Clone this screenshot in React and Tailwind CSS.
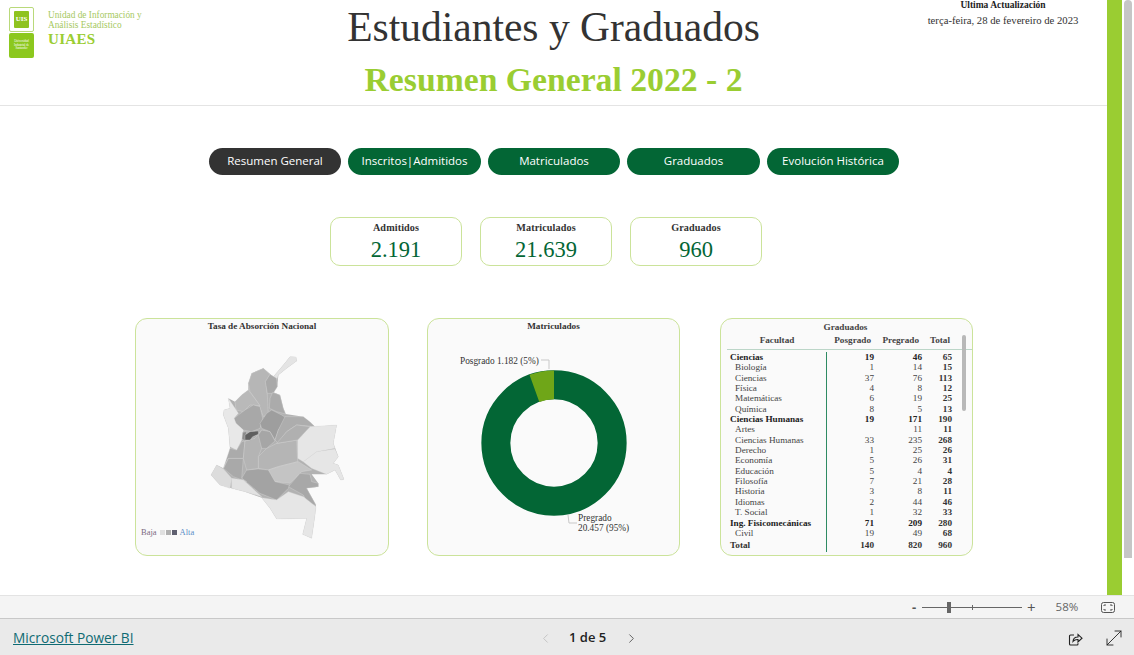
import React from "react";
import { ChevronLeft, ChevronRight, MoveDiagonal } from "lucide-react";

const tabs = ["Resumen General", "Inscritos|Admitidos", "Matriculados", "Graduados", "Evolución Histórica"];

const kpis = [
  { label: "Admitidos", value: "2.191" },
  { label: "Matriculados", value: "21.639" },
  { label: "Graduados", value: "960" },
];

const rows = [
  ["Ciencias", "19", "46", "65", true],
  ["Biología", "1", "14", "15"],
  ["Ciencias", "37", "76", "113"],
  ["Física", "4", "8", "12"],
  ["Matemáticas", "6", "19", "25"],
  ["Química", "8", "5", "13"],
  ["Ciencias Humanas", "19", "171", "190", true],
  ["Artes", "", "11", "11"],
  ["Ciencias Humanas", "33", "235", "268"],
  ["Derecho", "1", "25", "26"],
  ["Economía", "5", "26", "31"],
  ["Educación", "5", "4", "4"],
  ["Filosofía", "7", "21", "28"],
  ["Historia", "3", "8", "11"],
  ["Idiomas", "2", "44", "46"],
  ["T. Social", "1", "32", "33"],
  ["Ing. Fisicomecánicas", "71", "209", "280", true],
  ["Civil", "19", "49", "68"],
];

const outline =
  "295,250 315,260 335,240 355,225 355,205 365,175 400,160 430,185 460,150 480,125 498,126 500,138 470,160 445,180 442,215 430,232 450,240 460,280 467,297 520,305 555,335 620,330 610,385 625,425 610,445 625,450 642,493 632,495 615,465 590,478 545,478 565,505 565,515 530,520 558,570 555,600 545,670 518,658 530,610 440,612 420,580 395,548 345,530 305,520 270,510 243,480 260,450 280,460 295,430 300,400 295,340 280,300 282,285 300,280";

// departamentos, traced by hand from the reference
const regions = [
  ["#e4e4e4", "430,185 460,150 480,125 498,126 500,138 470,160 445,180 440,195"],
  ["#b6b6b6", "365,175 400,160 420,178 408,200 412,240 415,300 400,305 385,265 360,230 355,205"],
  ["#a9a9a9", "420,178 440,190 442,215 430,235 412,235 406,200"],
  ["#b9b9b9", "335,240 355,225 385,265 390,272 360,270 340,290 318,285 315,260"],
  ["#ababab", "428,232 450,240 460,280 467,297 440,290 418,280 420,250"],
  ["#a8a8a8", "345,285 370,270 390,275 398,310 390,340 365,350 340,345 315,325 312,310 325,300"],
  ["#9e9e9e", "410,295 425,285 455,300 470,310 445,345 435,375 420,350 395,340 390,325"],
  ["#adadad", "465,305 520,305 540,320 555,335 500,330 470,350 445,385 435,375 445,345"],
  ["#e8e8e8", "295,250 325,295 312,310 318,325 340,345 335,375 320,405 300,395 295,340 280,300 282,285 300,280"],
  ["#e6e6e6", "540,335 620,330 610,385 615,400 560,410 520,440 503,430 503,375"],
  ["#e6e6e6", "520,440 560,410 615,402 625,425 610,445 625,450 642,493 632,495 615,465 590,478 545,460"],
  ["#b5b5b5", "500,375 503,440 445,455 415,465 385,460 385,425 410,400 440,385"],
  ["#b0b0b0", "440,385 470,350 500,330 540,335 503,375"],
  ["#c4c4c4", "415,465 445,455 505,440 545,465 515,470 480,505 435,500 420,490"],
  ["#a8a8a8", "475,515 510,475 540,478 545,500 565,505 565,515 530,520 558,570 535,570 520,540"],
  ["#a3a3a3", "385,462 415,465 435,500 478,510 475,520 440,555 390,535 335,490 350,465"],
  ["#a9a9a9", "280,460 295,430 340,430 335,490 350,500 310,485"],
  ["#dcdcdc", "243,480 260,450 280,462 305,490 300,520 270,510"],
  ["#e2e2e2", "305,490 340,495 395,545 345,530 305,520"],
  ["#e6e6e6", "395,548 440,555 475,530 520,545 558,575 555,600 545,670 518,658 530,610 440,612 420,580"],
  ["#ababab", "300,400 320,405 335,380 345,378 340,430 295,430 280,460"],
  ["#b4b4b4", "345,378 375,370 395,345 410,350 395,400 385,425 385,460 350,465 340,430"],
  ["#a6a6a6", "385,360 395,345 420,350 435,378 410,400 395,400"],
  ["#8c8c8c", "338,352 350,350 346,378 336,372"],
  ["#5f5f5f", "345,360 360,350 385,348 385,358 368,365 360,375 345,375"],
];

const ColombiaMap = () => (
  <svg viewBox="240 120 405 555" className="h-[185px] w-[135px] mt-[19px] shrink-0">
    <polygon points={outline} fill="#b2b2b2" />
    {regions.map(([fill, points], i) => (
      <polygon key={i} points={points} fill={fill} stroke="#dedede" strokeWidth="1" strokeLinejoin="round" />
    ))}
  </svg>
);

// outer r 72.6, inner r 43.7, posgrado slice is 5.46%
const Donut = () => (
  <svg width="251" height="219" className="block" fontFamily="'Liberation Serif', serif" fontSize="9.3">
    <g transform="translate(-1 0)">
      <circle cx="127" cy="107" r="58.15" fill="none" stroke="#036635" strokeWidth="29" />
      <path d="M127 34.4 A72.6 72.6 0 0 0 102.5 38.7 L112.3 65.9 A43.7 43.7 0 0 1 127 63.3 Z" fill="#6fa618" />
    </g>
    <polyline points="113,24 121,24 121,33" fill="none" stroke="#c8c8c8" />
    <polyline points="140,179 141,187 149,187" fill="none" stroke="#c8c8c8" />
    <text x="32" y="28" fill="#333">Posgrado 1.182 (5%)</text>
    <text x="150" y="185" fill="#333">Pregrado</text>
    <text x="150" y="195" fill="#333">20.457 (95%)</text>
  </svg>
);

const Card = ({ title, className, children }) => (
  <div className={`relative h-[238px] rounded-[12px] border border-[#cbe39a] bg-[#fafafa] overflow-hidden ${className}`}>
    {title && <div className="h-[17px] text-center text-[9.2px] leading-[15px] font-bold text-[#333]">{title}</div>}
    {children}
  </div>
);

const GradRow = ({ row }) => {
  const [name, pos, pre, total, bold] = row;
  return (
    <div className={`grid grid-cols-[100px_47px_48px_30px] h-[10.35px] text-[9.2px] leading-[10.35px] ${bold ? "font-bold text-[#222]" : "text-[#444]"}`}>
      <div className={`border-r border-[#2e8b63] whitespace-nowrap ${bold ? "pl-[3px]" : "pl-[8px]"}`}>{name}</div>
      <div className="text-right">{pos}</div>
      <div className="text-right">{pre}</div>
      <div className="text-right font-bold text-[#333]">{total}</div>
    </div>
  );
};

const GradTable = () => (
  <div className="flex flex-col">
    <div className="ml-[6px] grid grid-cols-[100px_47px_48px_30px] h-[16px] border-b border-[#bcd6c8] text-[9.2px] leading-[12px] font-bold text-[#444]">
      <div className="text-center">Facultad</div>
      <div className="text-right pr-[3px] whitespace-nowrap">Posgrado</div>
      <div className="text-right pr-[3px] whitespace-nowrap">Pregrado</div>
      <div className="text-right pr-[2px]">Total</div>
    </div>
    <div className="ml-[6px] pt-[2px]">
      {rows.map((row, i) => (
        <GradRow key={i} row={row} />
      ))}
      <div className="grid grid-cols-[100px_47px_48px_30px] h-[14px] text-[9.2px] leading-[14px] font-bold text-[#333]">
        <div className="border-r border-[#2e8b63] pl-[3px]">Total</div>
        <div className="text-right">140</div>
        <div className="text-right">820</div>
        <div className="text-right">960</div>
      </div>
    </div>
    {/* table scrollbar */}
    <div className="absolute left-[241px] top-[16px] h-[76px] w-[4px] rounded-full bg-[#b8b8b8]" />
  </div>
);

export default function App() {
  return (
    <div className="flex h-[655px] w-[1134px] flex-col overflow-hidden bg-white font-['Liberation_Serif',serif]">
      <div className="flex h-[595px] shrink-0">
        <div className="w-[1107px] shrink-0">
          {/* header */}
          <div className="box-border flex h-[106px] border-b border-[#e4e4e4]">
            <div className="flex w-[340px] shrink-0 pl-[9px] pt-[7px]">
              <div className="w-[25px] shrink-0">
                <div className="flex h-[25px] items-center justify-center rounded-[2px] border border-[#b9d97a] bg-white">
                  <div className="flex h-[17px] w-[15px] items-center justify-center rounded-[1px] bg-[#8fc31f] text-[7px] font-bold leading-none text-white">UIS</div>
                </div>
                <div className="mt-[1px] flex h-[25px] flex-col items-center justify-center rounded-[2px] bg-[#8cc81e] text-center text-[3px] leading-[3.6px] text-white">
                  <span>Universidad</span>
                  <span>Industrial de</span>
                  <span>Santander</span>
                </div>
              </div>
              <div className="ml-[14px] text-[#a6c95f]">
                <div className="pt-[3px] text-[9.3px] leading-[10px]">Unidad de Información y</div>
                <div className="text-[9.3px] leading-[10px]">Análisis Estadístico</div>
                <div className="mt-[1px] text-[15px] font-bold leading-[17px] tracking-[0.3px] text-[#9acd32]">UIAES</div>
              </div>
            </div>
            <div className="w-[427px] shrink-0 text-center">
              <div className="pt-[3px] text-[41.5px] leading-[48px] whitespace-nowrap text-[#333]">Estudiantes y Graduados</div>
              <div className="mt-[10px] text-[33.7px] font-bold leading-[37px] whitespace-nowrap text-[#9acd32]">Resumen General 2022 - 2</div>
            </div>
            <div className="flex-1">
              <div className="ml-auto mr-[24px] w-[160px] text-center text-[#222]">
                <div className="text-[9.5px] font-bold leading-[10px]">Ultima Actualización</div>
                <div className="mt-[5px] text-[10.7px] leading-[11px] whitespace-nowrap text-[#333]">terça-feira, 28 de fevereiro de 2023</div>
              </div>
            </div>
          </div>

          {/* tabs */}
          <div className="mt-[42px] flex justify-center gap-[7px] pl-[1px] font-['Open_Sans',sans-serif]">
            {tabs.map((tab, i) => (
              <button
                key={tab}
                className={`h-[27px] w-[132.5px] rounded-full pb-[1px] text-[11.5px] text-white ${i === 0 ? "bg-[#333333]" : "bg-[#036635]"}`}
              >
                {tab}
              </button>
            ))}
          </div>

          {/* kpis */}
          <div className="ml-[330px] mt-[42px] flex gap-[18px]">
            {kpis.map((kpi) => (
              <div key={kpi.label} className="box-border h-[49px] w-[132px] rounded-[10px] border border-[#cbe39a] bg-white pt-[3px] text-center">
                <div className="text-[10.2px] font-bold leading-[13px] tracking-[0.1px] text-[#333]">{kpi.label}</div>
                <div className="pt-[2px] text-[22.5px] leading-[27px] text-[#036635]">{kpi.value}</div>
              </div>
            ))}
          </div>

          {/* charts */}
          <div className="ml-[135px] mt-[52px] flex">
            <Card title="Tasa de Absorción Nacional" className="w-[254px]">
              <div className="flex">
                <div className="mb-[3px] flex w-[74px] shrink-0 items-center self-end pl-[5px] text-[8.5px] leading-[10px]">
                  <span className="text-[#7a6a80]">Baja</span>
                  <span className="ml-[3px] h-[5px] w-[5px] bg-[#e0e0e0]" />
                  <span className="ml-[1px] h-[5px] w-[5px] bg-[#b0b0b0]" />
                  <span className="ml-[1px] h-[5px] w-[5px] bg-[#5f6070]" />
                  <span className="ml-[3px] text-[#5b8ec7]">Alta</span>
                </div>
                <ColombiaMap />
              </div>
            </Card>
            <Card title="Matriculados" className="ml-[38px] w-[253px]">
              <Donut />
            </Card>
            <Card className="ml-[40px] w-[253px]">
              <div className="h-[15px] pt-[2px] pr-[2px] text-center text-[9.2px] leading-[12px] font-bold text-[#444]">Graduados</div>
              <GradTable />
            </Card>
          </div>
        </div>
        <div className="w-[15px] shrink-0 bg-[#9acd32]" />
        <div className="ml-[2px] h-[558px] w-[8px] rounded-t-full rounded-b-[2px] bg-[#c6c6c6]" />
      </div>

      {/* zoom bar */}
      <div className="box-border flex h-[24px] shrink-0 items-center border-y border-t-[#e3e3e3] border-b-[#c8c8c8] bg-[#f4f4f4] pl-[912px] font-['Open_Sans',sans-serif] text-[#555]">
        <span className="w-[10px] text-[13px] font-bold leading-none">-</span>
        <div className="relative flex h-[11px] w-[100px] items-center">
          <div className="h-[1px] flex-1 bg-[#666]" />
          <div className="absolute left-[25px] top-0 h-[11px] w-[4px] bg-[#666]" />
          <div className="absolute left-[50px] top-[3px] h-[5px] w-[1px] bg-[#666]" />
        </div>
        <span className="ml-[5px] text-[15px] leading-none">+</span>
        <span className="ml-[20px] text-[11.5px] text-[#666]">58%</span>
        <svg width="14" height="11" viewBox="0 0 14 11" fill="none" stroke="#555" className="ml-[23px]">
          <rect x="0.5" y="0.5" width="13" height="10" rx="2" />
          <path d="M3 4V3H5M9 3H11V4M11 7V8H9M5 8H3V7" />
        </svg>
      </div>

      {/* footer */}
      <div className="flex flex-1 items-center bg-[#eaeaea] pt-[2px] font-['Open_Sans',sans-serif]">
        <a className="ml-[13px] w-[120px] whitespace-nowrap text-[13.7px] text-[#0f6b73] underline">Microsoft Power BI</a>
        <ChevronLeft size={15} strokeWidth={1.3} className="ml-[405px] text-[#bdbdbd]" />
        <span className="ml-[16px] w-[38px] whitespace-nowrap text-[13px] font-semibold text-[#222]">1 de 5</span>
        <ChevronRight size={15} strokeWidth={1.3} className="ml-[17px] text-[#444]" />
        <svg width="15" height="15" viewBox="0 0 15 15" fill="none" stroke="#222" strokeWidth="1.1" className="ml-[429px]">
          <path d="M10 12.2V13a1 1 0 0 1-1 1H2.5a1 1 0 0 1-1-1V5a1 1 0 0 1 1-1H6" />
          <path d="M5 10.5C5.2 7.5 7 6 10 6V3.5L14 7.2L10 11V8.5C8 8.3 6.3 9 5 10.5Z" />
        </svg>
        <MoveDiagonal size={24} strokeWidth={0.9} className="ml-[19px] text-[#222]" />
      </div>
    </div>
  );
}
